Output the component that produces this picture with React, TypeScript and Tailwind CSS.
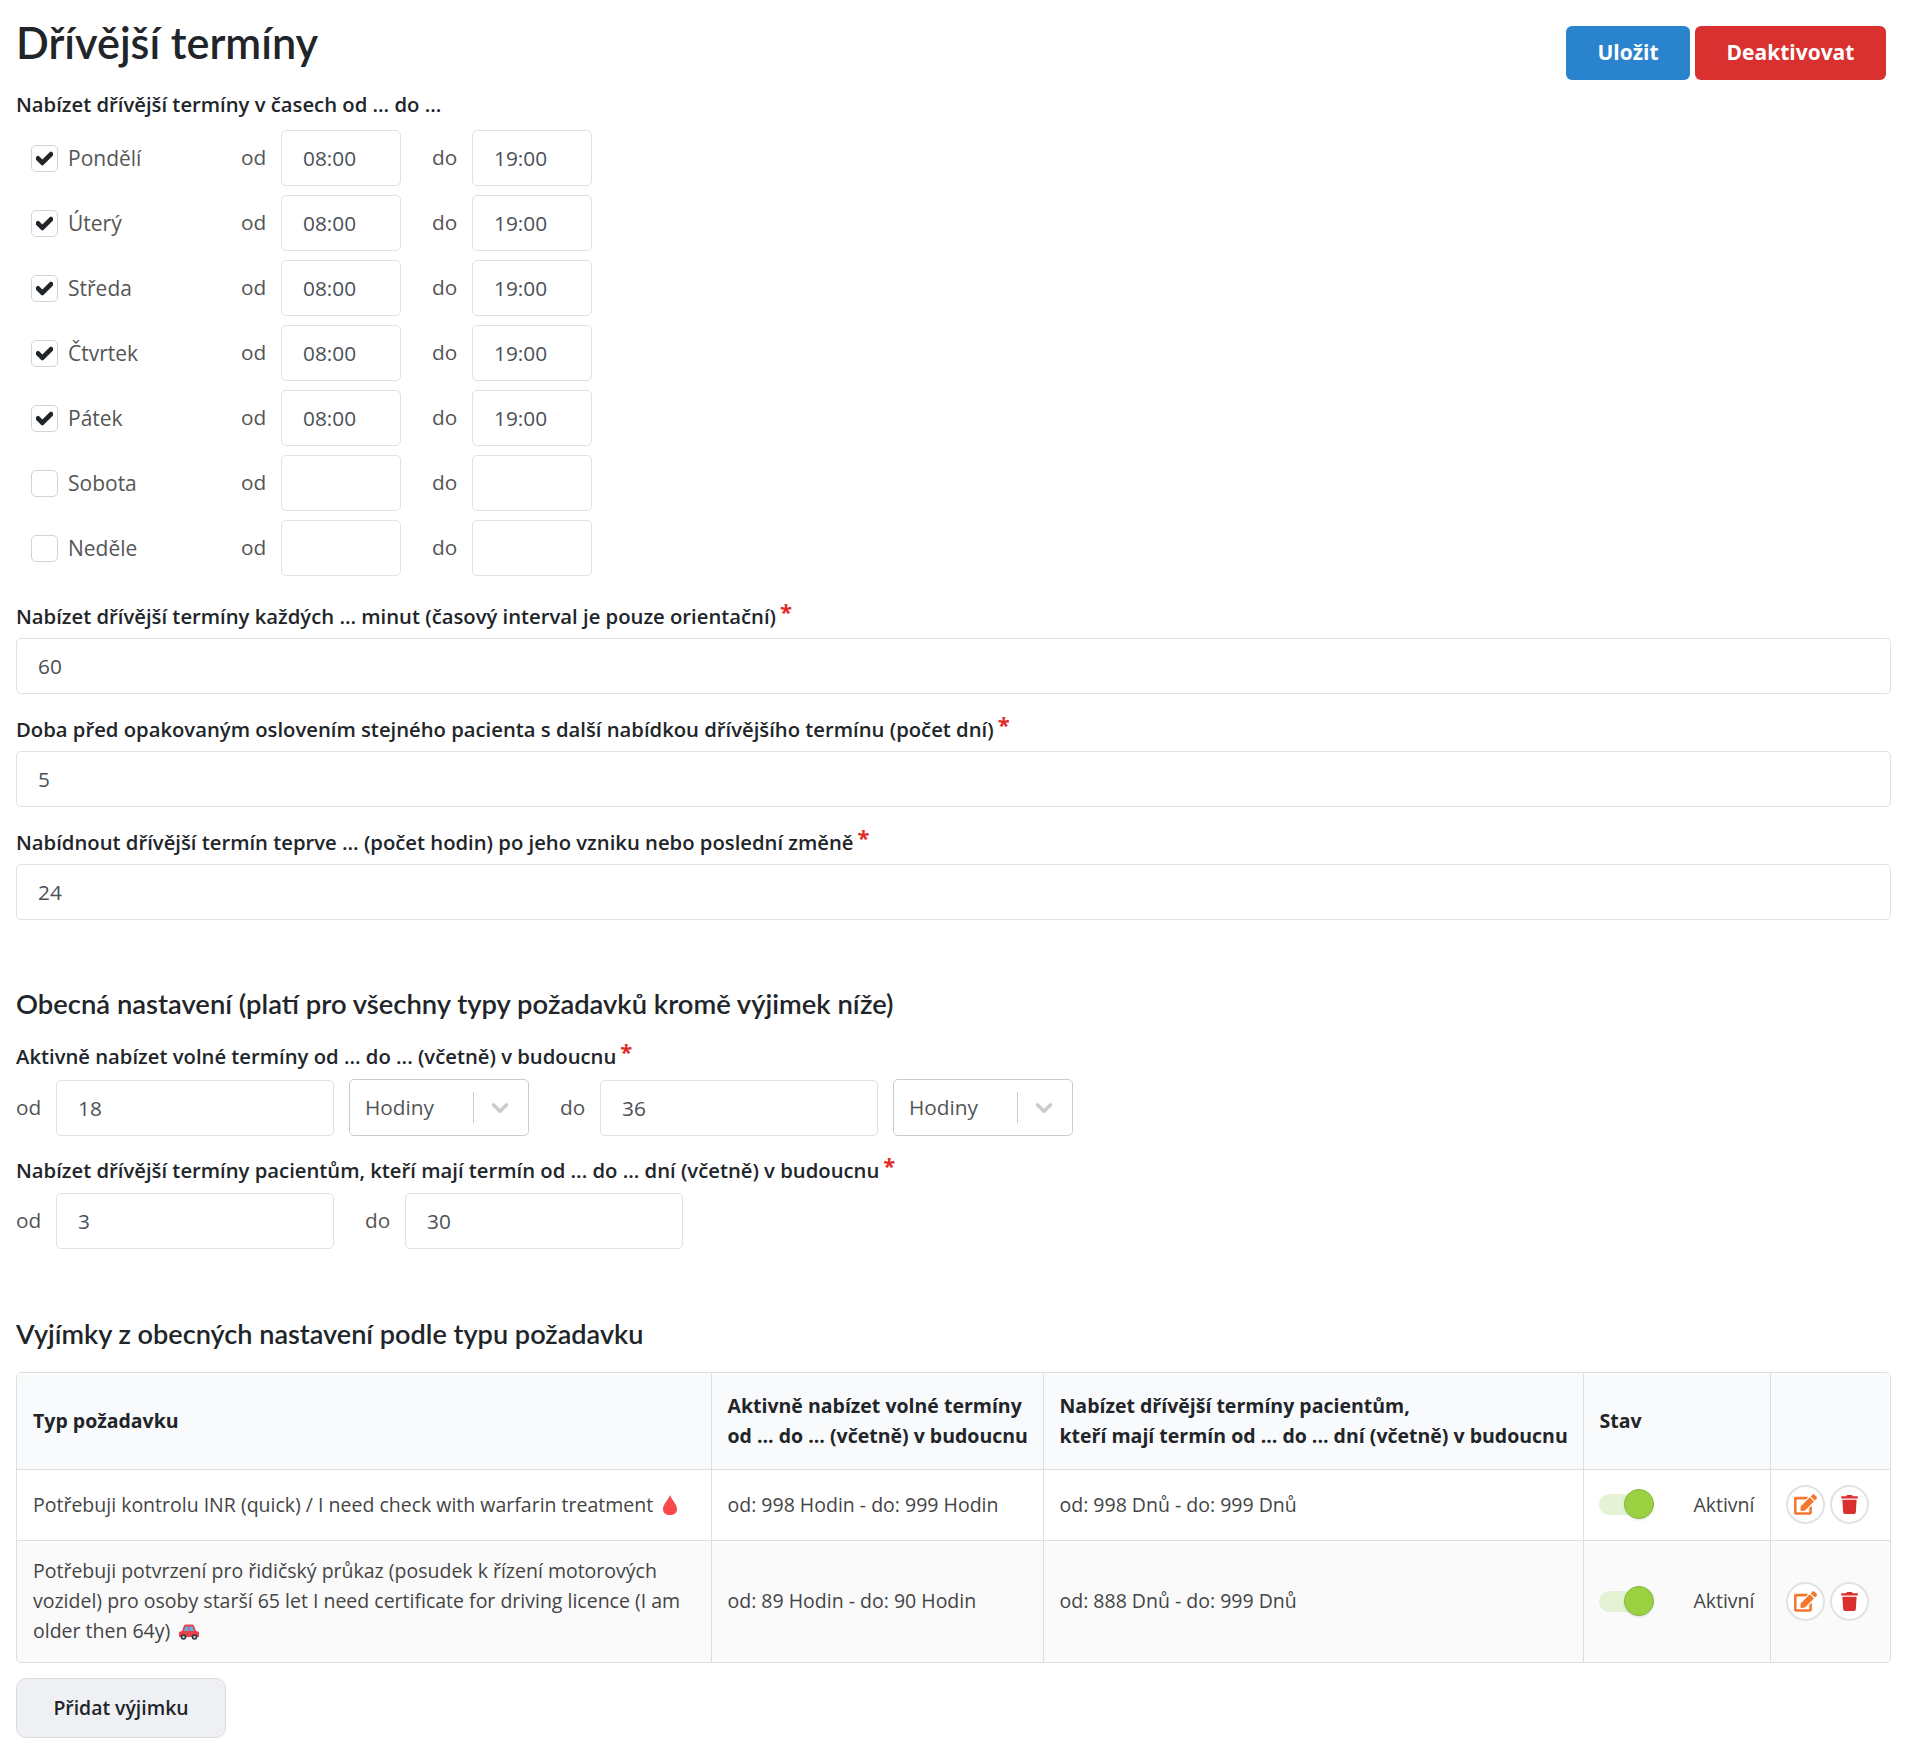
import { ChevronDown } from "lucide-react";
import { FaCheck, FaEdit, FaTrash } from "react-icons/fa";

const days = [
  { name: "Pondělí", checked: true },
  { name: "Úterý", checked: true },
  { name: "Středa", checked: true },
  { name: "Čtvrtek", checked: true },
  { name: "Pátek", checked: true },
  { name: "Sobota", checked: false },
  { name: "Neděle", checked: false },
];

function Field({ value, className }: { value: string; className: string }) {
  return (
    <input
      readOnly
      value={value}
      className={`h-14 rounded-[5px] border border-[#dee2e6] bg-white px-[21px] text-[20.8px] text-[#495057] outline-none ${className}`}
    />
  );
}

function Required({ children }: { children: string }) {
  return (
    <label className="-mt-[1px] block pb-[1px] text-[20.25px] leading-[28px] font-semibold text-[#212529]">
      {children}
      <span className="relative top-[-4px] ml-[4px] text-[22px] font-bold leading-none text-[#e02b2b]">*</span>
    </label>
  );
}

function UnitSelect() {
  return (
    <div className="flex h-[57px] w-[180px] items-center rounded-[5px] border border-[#ccc] bg-white pl-[15px] text-[20.8px] text-[#555]">
      <span className="w-[108px]">Hodiny</span>
      <span className="h-[31px] w-px bg-[#ccc]" />
      <ChevronDown size={26} strokeWidth={3.2} className="ml-[13px] text-[#ccc]" />
    </div>
  );
}

function Drop() {
  return (
    <svg width="16" height="22" viewBox="0 0 16 20" className="ml-[9px] inline-block align-[-4px]">
      <path d="M8 0C9 4 15 9 15 14C15 18 12 20 8 20C4 20 1 18 1 14C1 9 7 4 8 0Z" fill="#f8484a" />
    </svg>
  );
}

function Car() {
  return (
    <svg width="22" height="18" viewBox="0 0 22 18" className="ml-2 inline-block align-[-3px]">
      <path d="M1 9L4 8L6 2.5Q6.500 1.500 8 1.500H14Q15.500 1.500 16 2.500L18 8L21 9V14H1Z" fill="#e8424f" />
      <path d="M7.500 3.500H10.500V8H6ZM11.500 3.500H14.500L16 8H11.500Z" fill="#5fb3e6" />
      <circle cx="5.500" cy="14" r="2.800" fill="#31373d" />
      <circle cx="16.500" cy="14" r="2.800" fill="#31373d" />
      <circle cx="5.500" cy="14" r="1.200" fill="#ccd6dd" />
      <circle cx="16.500" cy="14" r="1.200" fill="#ccd6dd" />
    </svg>
  );
}

function StatusCell() {
  return (
    <div className="flex items-center justify-between">
      <span className="relative block h-[21px] w-[41px] rounded-full bg-[#e4f3d3]">
        <span className="absolute top-[-5px] left-[25px] h-[30px] w-[30px] rounded-full border border-[#86b83c] bg-[#9bd040] shadow-sm" />
      </span>
      <span>Aktivní</span>
    </div>
  );
}

function ActionsCell() {
  return (
    <div className="flex gap-[5px]">
      <button className="flex h-[39px] w-[39px] items-center justify-center rounded-full border-2 border-[#e2e2e2] bg-white text-[#f4772e]">
        <FaEdit size={23} />
      </button>
      <button className="flex h-[39px] w-[39px] items-center justify-center rounded-full border-2 border-[#e2e2e2] bg-white text-[#d92f2f]">
        <FaTrash size={19} />
      </button>
    </div>
  );
}

export default function App() {
  return (
    <div className="min-h-[1752px] bg-white px-4 font-['Open_Sans',sans-serif] text-[#212529]">
      <div className="flex items-start justify-between pr-[5px] pt-[26px]">
        <h1 className="-mt-[11px] mb-[1px] font-['Lato',sans-serif] text-[43.2px] leading-[54px] font-semibold text-[#212529]">Dřívější termíny</h1>
        <div className="flex gap-[5px]">
          <button className="h-[54px] w-[124px] rounded-[6px] bg-[#2a83cd] text-[21px] font-bold text-white">Uložit</button>
          <button className="h-[54px] w-[191px] rounded-[6px] bg-[#d93030] text-[21px] font-bold text-white">Deaktivovat</button>
        </div>
      </div>

      <label className="mt-[10px] block pb-[1px] text-[20.25px] leading-[28px] font-semibold">Nabízet dřívější termíny v časech od ... do ...</label>

      <div className="mt-[11px] flex flex-col gap-[9px]">
        {days.map((day) => (
          <div key={day.name} className="flex items-center">
            <span className="ml-[15px] flex h-[27px] w-[27px] items-center justify-center rounded-[5px] border border-[#d4d4d5] bg-white text-[#212529]">
              {day.checked && <FaCheck size={17} stroke="currentColor" strokeWidth={40} />}
            </span>
            <span className="ml-[10px] w-[173px] pt-[1px] text-[21px] text-[#555]">{day.name}</span>
            <span className="w-[40px] text-[20.8px] text-[#555]">od</span>
            <Field value={day.checked ? "08:00" : ""} className="w-[120px]" />
            <span className="ml-[31px] w-[40px] text-[20.8px] text-[#555]">do</span>
            <Field value={day.checked ? "19:00" : ""} className="w-[120px]" />
          </div>
        ))}
      </div>

      <div className="mt-[27px]">
        <Required>Nabízet dřívější termíny každých ... minut (časový interval je pouze orientační)</Required>
        <Field value="60" className="mt-[7px] w-full" />
      </div>
      <div className="mt-[22px]">
        <Required>Doba před opakovaným oslovením stejného pacienta s další nabídkou dřívějšího termínu (počet dní)</Required>
        <Field value="5" className="mt-[7px] w-full" />
      </div>
      <div className="mt-[22px]">
        <Required>Nabídnout dřívější termín teprve ... (počet hodin) po jeho vzniku nebo poslední změně</Required>
        <Field value="24" className="mt-[7px] w-full" />
      </div>

      <h2 className="mt-[66px] font-['Lato',sans-serif] text-[27.4px] leading-[36px] font-semibold text-[#212529]">Obecná nastavení (platí pro všechny typy požadavků kromě výjimek níže)</h2>

      <div className="mt-[21px]">
        <Required>Aktivně nabízet volné termíny od ... do ... (včetně) v budoucnu</Required>
        <div className="mt-[8px] flex items-center text-[20.8px] text-[#555]">
          <span className="w-[40px]">od</span>
          <Field value="18" className="w-[278px]" />
          <span className="ml-[15px]"><UnitSelect /></span>
          <span className="ml-[31px] w-[40px]">do</span>
          <Field value="36" className="w-[278px]" />
          <span className="ml-[15px]"><UnitSelect /></span>
        </div>
      </div>
      <div className="mt-[21px]">
        <Required>Nabízet dřívější termíny pacientům, kteří mají termín od ... do ... dní (včetně) v budoucnu</Required>
        <div className="mt-[8px] flex items-center text-[20.8px] text-[#555]">
          <span className="w-[40px]">od</span>
          <Field value="3" className="w-[278px]" />
          <span className="ml-[31px] w-[40px]">do</span>
          <Field value="30" className="w-[278px]" />
        </div>
      </div>

      <h2 className="mt-[67px] font-['Lato',sans-serif] text-[27.1px] leading-[36px] font-semibold text-[#212529]">Vyjímky z obecných nastavení podle typu požadavku</h2>

      <div className="mt-[20px] w-full overflow-hidden rounded-[5px] border border-[#dedfe0]">
        <table className="w-full table-fixed border-collapse text-[19.5px] leading-[30px] text-[#444]">
          <thead>
            <tr className="h-[96px] bg-[#f9fafb] text-left font-semibold text-[#212529]">
              <th className="w-[694px] px-4 font-bold">Typ požadavku</th>
              <th className="w-[332px] border-l border-[#dedfe0] pl-4 font-bold whitespace-nowrap">Aktivně nabízet volné termíny<br />od ... do ... (včetně) v budoucnu</th>
              <th className="w-[540px] border-l border-[#dedfe0] pl-4 font-bold whitespace-nowrap">Nabízet dřívější termíny pacientům,<br />kteří mají termín od ... do ... dní (včetně) v budoucnu</th>
              <th className="w-[187px] border-l border-[#dedfe0] px-4 font-bold">Stav</th>
              <th className="border-l border-[#dedfe0] px-4"></th>
            </tr>
          </thead>
          <tbody>
            <tr className="h-[71px] border-t border-[#dedfe0]">
              <td className="px-4">Potřebuji kontrolu INR (quick) / I need check with warfarin treatment<Drop /></td>
              <td className="border-l border-[#dedfe0] px-4">od: 998 Hodin - do: 999 Hodin</td>
              <td className="border-l border-[#dedfe0] px-4">od: 998 Dnů - do: 999 Dnů</td>
              <td className="border-l border-[#dedfe0] px-[15px]"><StatusCell /></td>
              <td className="border-l border-[#dedfe0] pl-[15px]"><ActionsCell /></td>
            </tr>
            <tr className="h-[122px] border-t border-[#dedfe0] bg-[#fafafa]">
              <td className="px-4">Potřebuji potvrzení pro řidičský průkaz (posudek k řízení motorových vozidel) pro osoby starší 65 let I need certificate for driving licence (I am older then 64y)<Car /></td>
              <td className="border-l border-[#dedfe0] px-4">od: 89 Hodin - do: 90 Hodin</td>
              <td className="border-l border-[#dedfe0] px-4">od: 888 Dnů - do: 999 Dnů</td>
              <td className="border-l border-[#dedfe0] px-[15px]"><StatusCell /></td>
              <td className="border-l border-[#dedfe0] pl-[15px]"><ActionsCell /></td>
            </tr>
          </tbody>
        </table>
      </div>

      <button className="mt-[15px] h-[60px] w-[210px] rounded-[10px] border border-[#dcdcdc] bg-[#eff0f4] text-[19.4px] font-semibold text-[#212529]">Přidat výjimku</button>
    </div>
  );
}
